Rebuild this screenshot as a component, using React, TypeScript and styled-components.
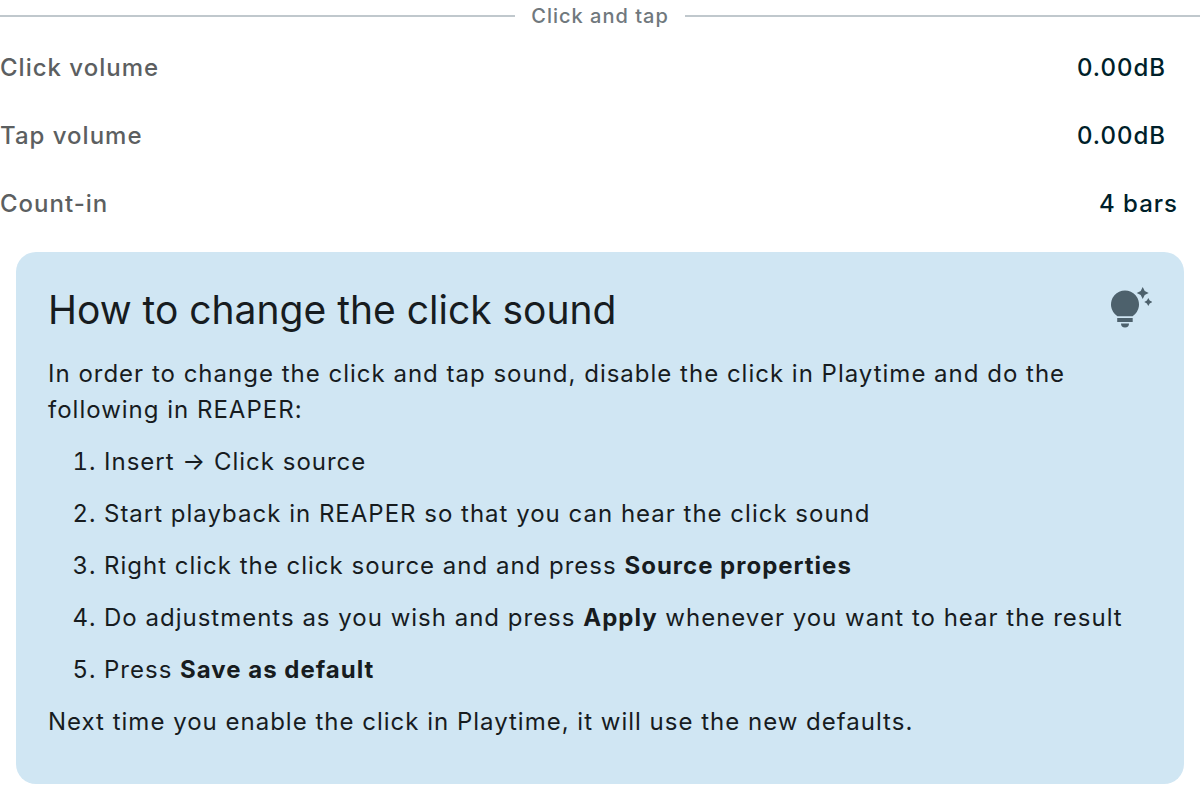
import React from 'react';
import styled, { createGlobalStyle } from 'styled-components';

const GlobalStyle = createGlobalStyle`
  * { box-sizing: border-box; }
  body {
    margin: 0;
    background: #fff;
    color: #171c1f;
    font-family: Inter, "Liberation Sans", sans-serif;
    font-size: 24px;
    line-height: 36px;
    letter-spacing: 1px;
  }
`;

const SectionHeading = styled.h2`
  display: flex;
  align-items: center;
  gap: 16px;
  height: 32px;
  margin: 0 0 2px;
  color: #70787d;
  font-size: 20px;
  font-weight: 500;
  line-height: 32px;

  &::before,
  &::after {
    content: '';
    flex: 1;
    height: 2px;
    background: #c0c8cd;
  }
`;

const SettingRow = styled.div`
  display: flex;
  align-items: center;
  justify-content: space-between;
  height: 68px;
  font-weight: 500;
`;

const SettingLabel = styled.span`
  color: #5c5f61;
`;

const SettingValue = styled.button<{ $inset: number }>`
  border: 0;
  margin: 0;
  padding: 0 ${(p) => p.$inset}px 0 16px;
  background: none;
  color: #001f2a;
  font: inherit;
  letter-spacing: inherit;
`;

const TipCard = styled.section`
  margin: 14px 16px 16px;
  padding: 32px 32px 44px;
  border-radius: 20px;
  background: #d0e6f3;
`;

const TipHeader = styled.header`
  display: flex;
  align-items: flex-start;
  justify-content: space-between;
  margin-bottom: 20px;
`;

const TipTitle = styled.h3`
  margin: 0;
  font-size: 39px;
  font-weight: 400;
  line-height: 52px;
  letter-spacing: 0;
`;

const BulbSvg = styled.svg`
  flex: none;
  width: 44px;
  height: 48px;
  fill: #4d616c;
`;

const Paragraph = styled.p`
  margin: 0;
`;

const Steps = styled.ol`
  display: grid;
  gap: 16px;
  margin: 16px 0;
  padding: 0 0 0 56px;
`;

function BulbIcon() {
  return (
    <BulbSvg viewBox="0 0 44 48" aria-hidden="true">
      <path d="M9.4 32.2A14 14 0 1 1 24.6 32.2Z" />
      <path d="M9.2 34h15.5v4H9.2z" />
      <path d="M13 39.5h8a4 4 0 0 1-8 0z" />
      <path d="M34.7 3l2 4 4 2-4 2-2 4-2-4-4-2 4-2z" />
      <path d="M40.3 14l1.4 2.6 2.6 1.4-2.6 1.4-1.4 2.6-1.4-2.6-2.6-1.4 2.6-1.4z" />
    </BulbSvg>
  );
}

const settings = [
  { id: 'click', label: 'Click volume', value: '0.00dB', inset: 34 },
  { id: 'tap', label: 'Tap volume', value: '0.00dB', inset: 34 },
  { id: 'count', label: 'Count-in', value: '4 bars', inset: 22 },
];

export default function App() {
  return (
    <main>
      <GlobalStyle />
      <SectionHeading>Click and tap</SectionHeading>
      {settings.map((s) => (
        <SettingRow key={s.id}>
          <SettingLabel id={s.id}>{s.label}</SettingLabel>
          <SettingValue type="button" $inset={s.inset} aria-describedby={s.id}>
            {s.value}
          </SettingValue>
        </SettingRow>
      ))}
      <TipCard>
        <TipHeader>
          <TipTitle>How to change the click sound</TipTitle>
          <BulbIcon />
        </TipHeader>
        <Paragraph>
          In order to change the click and tap sound, disable the click in Playtime and do the
          following in REAPER:
        </Paragraph>
        <Steps>
          <li>Insert → Click source</li>
          <li>Start playback in REAPER so that you can hear the click sound</li>
          <li>
            Right click the click source and and press <strong>Source properties</strong>
          </li>
          <li>
            Do adjustments as you wish and press <strong>Apply</strong> whenever you want to hear
            the result
          </li>
          <li>
            Press <strong>Save as default</strong>
          </li>
        </Steps>
        <Paragraph>Next time you enable the click in Playtime, it will use the new defaults.</Paragraph>
      </TipCard>
    </main>
  );
}
